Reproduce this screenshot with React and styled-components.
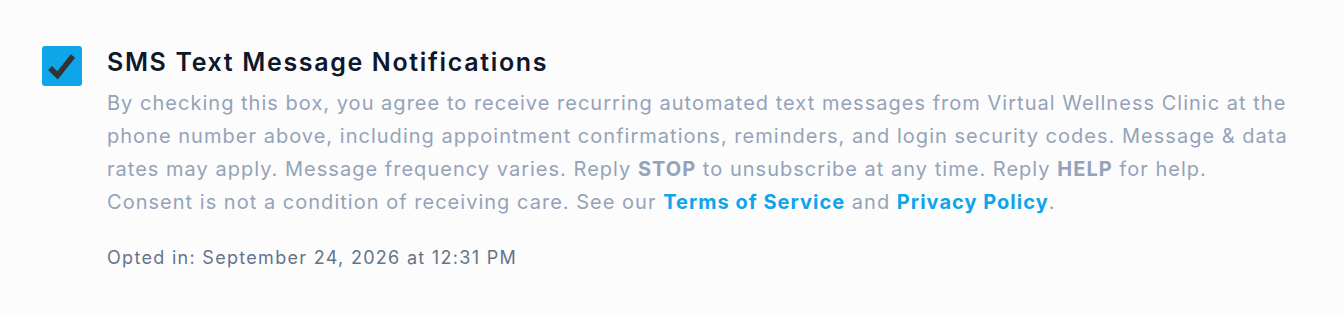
import React from "react";
import styled, { createGlobalStyle } from "styled-components";

const Global = createGlobalStyle`
  html, body { margin: 0; padding: 0; background: #fcfcfd; }
  body { font-family: Inter, "Noto Sans", sans-serif; -webkit-font-smoothing: antialiased; }
`;

const Wrap = styled.div`
  display: flex;
  align-items: flex-start;
  gap: 25px;
  padding: 46px 0 40px 42px;
`;

const Box = styled.div`
  flex: none;
  width: 40px;
  height: 40px;
  border-radius: 3px;
  background: #0ea5e9;
`;

const Content = styled.div`
  display: flex;
  flex-direction: column;
  width: 1192px;
`;

const Title = styled.div`
  font-size: 25px;
  font-weight: 600;
  letter-spacing: 1.65px;
  color: #0f172a;
  line-height: 32px;
  margin-bottom: 9px;
`;

const Body = styled.p`
  margin: 0;
  font-size: 20px;
  letter-spacing: 1.02px;
  line-height: 33px;
  color: #94a3b8;
`;

const Strong = styled.strong`
  font-weight: 700;
`;

const Link = styled.a`
  color: #0ea5e9;
  font-weight: 700;
  text-decoration: none;
`;

const Meta = styled.div`
  margin-top: 27px;
  font-size: 18px;
  letter-spacing: 1.3px;
  line-height: 24px;
  color: #64748b;
`;

export default function App() {
  return (
    <>
      <Global />
      <Wrap>
        <Box>
          <svg width="40" height="40" viewBox="0 0 40 40">
            <path d="M8 22 L15.5 29.5 L31 10" fill="none" stroke="#333" strokeWidth="5.5" strokeLinecap="butt" strokeLinejoin="miter" />
          </svg>
        </Box>
        <Content>
          <Title>SMS Text Message Notifications</Title>
          <Body>
            By checking this box, you agree to receive recurring automated text messages from Virtual Wellness Clinic at the phone number above, including appointment confirmations, reminders, and login security codes. Message &amp; data rates may apply. Message frequency varies. Reply <Strong>STOP</Strong> to unsubscribe at any time. Reply <Strong>HELP</Strong> for help. Consent is not a condition of receiving care. See our <Link href="#">Terms of Service</Link> and <Link href="#">Privacy Policy</Link>.
          </Body>
          <Meta>Opted in: September 24, 2026 at 12:31 PM</Meta>
        </Content>
      </Wrap>
    </>
  );
}
